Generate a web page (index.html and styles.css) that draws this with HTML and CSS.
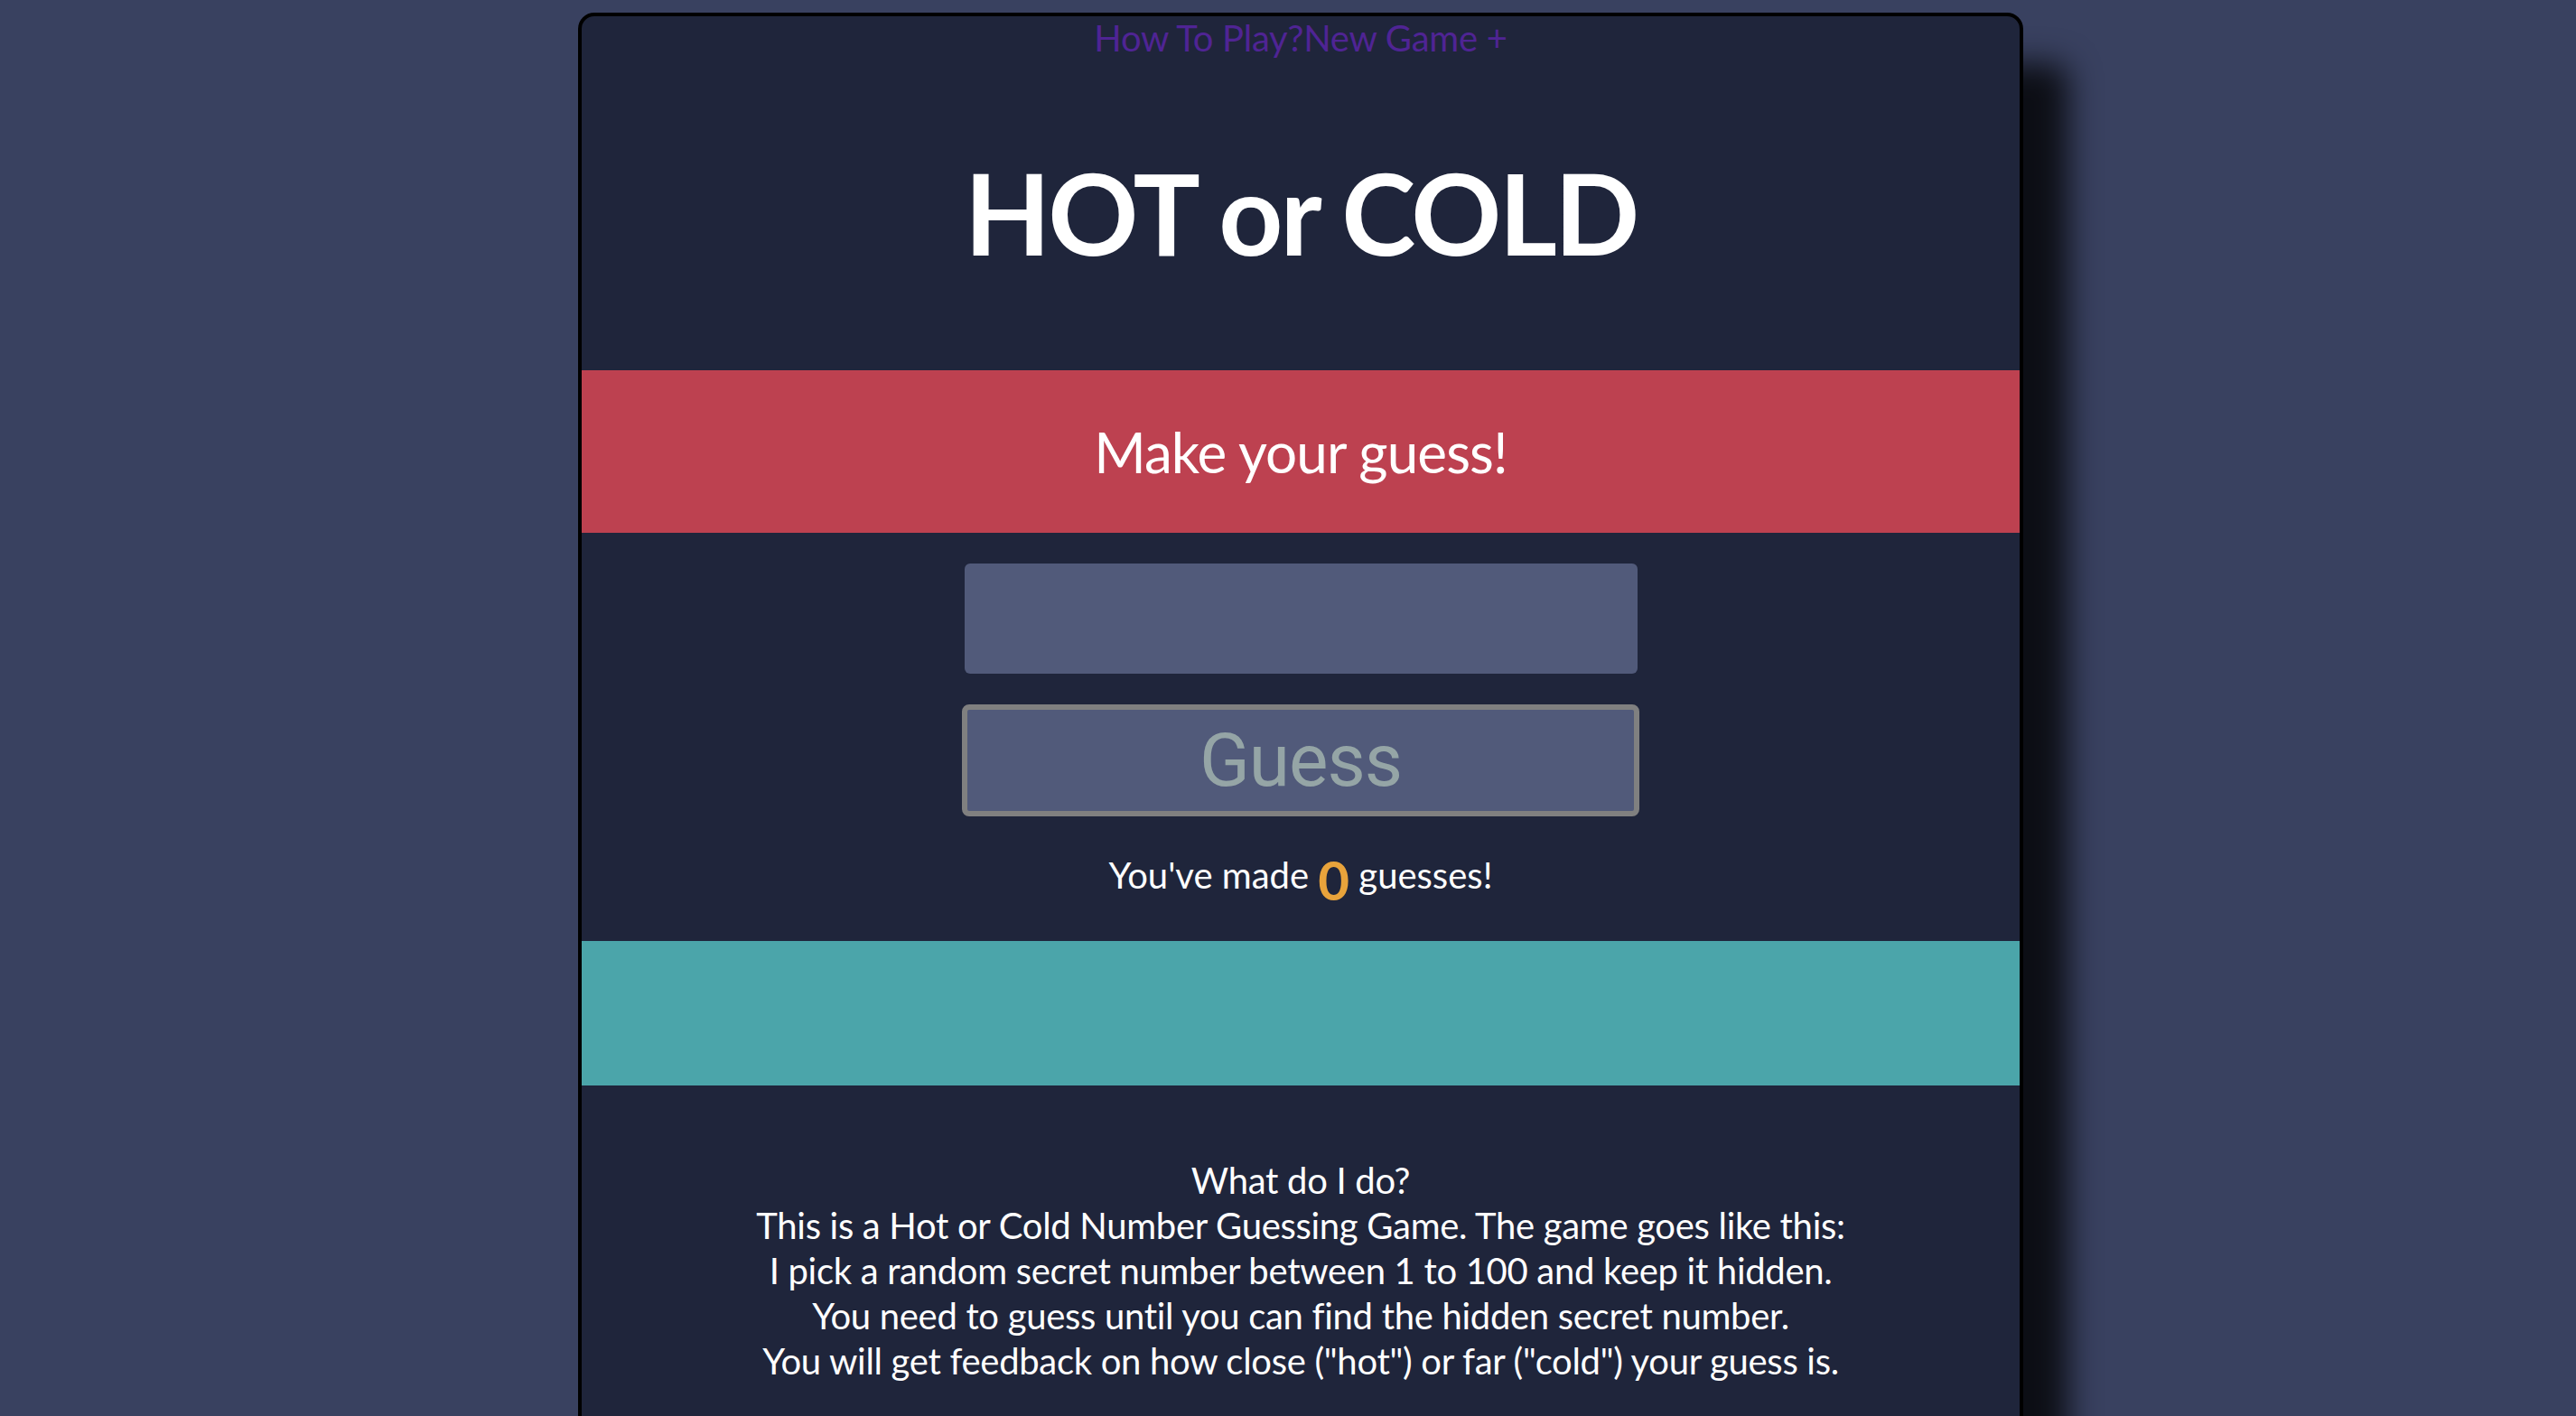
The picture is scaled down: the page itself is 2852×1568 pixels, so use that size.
FILE: index.html
```html
<!DOCTYPE html>
<html lang="en">
<head>
<meta charset="utf-8">
<title>HOT or COLD</title>
<link rel="stylesheet" href="styles.css">
</head>
<body>
<div class="card">
  <nav class="links"><a class="link" href="#">How To Play?</a><a class="link" href="#">New Game +</a></nav>
  <h1 class="title">HOT or COLD</h1>
  <h2 class="feedback">Make your guess!</h2>
  <form class="guess-form">
    <input class="guess-input" type="text" aria-label="Your guess">
    <button class="guess-btn" type="button">Guess</button>
  </form>
  <p class="count">You've made <span class="count-num">0</span> guesses!</p>
  <div class="history"></div>
  <div class="instructions">
    <p class="instr-text">What do I do?<br>This is a Hot or Cold Number Guessing Game. The game goes like this:<br>I pick a random secret number between 1 to 100 and keep it hidden.<br>You need to guess until you can find the hidden secret number.<br>You will get feedback on how close ("hot") or far ("cold") your guess is.</p>
  </div>
</div>
</body>
</html>
```

FILE: styles.css
```css
html, body {
  margin: 0;
  height: 100%;
}

body {
  background: #394160;
  padding: 14px 0 0 28px;
  box-sizing: border-box;
  overflow: hidden;
  font-family: Lato, "Noto Sans", sans-serif;
  color: #ffffff;
}

.card {
  width: 1600px;
  margin: 0 auto;
  box-sizing: border-box;
  background: #1f253b;
  border: 4px solid #000000;
  border-radius: 18px;
  box-shadow: 50px 56px 34px rgba(0, 0, 0, 0.78);
  padding-bottom: 300px;
}

.links {
  text-align: center;
  font-size: 40px;
  line-height: 48px;
  height: 48px;
  letter-spacing: -0.25px;
}

.link {
  color: #4f2494;
  text-decoration: none;
}

.title {
  margin: 95px 0 100px;
  text-align: center;
  font-size: 124px;
  line-height: 149px;
  font-weight: 700;
  letter-spacing: -3px;
  color: #ffffff;
}

.feedback {
  margin: 0;
  height: 180px;
  background: #bd4150;
  display: flex;
  align-items: center;
  justify-content: center;
  font-size: 62px;
  font-weight: 400;
  line-height: 74px;
  letter-spacing: -0.9px;
  color: #ffffff;
}

.guess-form {
  margin: 0;
  padding-top: 34px;
  display: flex;
  flex-direction: column;
  align-items: center;
  gap: 34px;
}

.guess-input {
  display: block;
  width: 745px;
  height: 122px;
  box-sizing: border-box;
  border: none;
  border-radius: 6px;
  background: #515a7a;
  margin: 0;
  padding: 0 20px;
  font-size: 60px;
  color: #ffffff;
}

.guess-btn {
  display: block;
  width: 750px;
  height: 124px;
  box-sizing: border-box;
  margin: 0;
  padding: 0;
  border: 6px solid #808080;
  border-radius: 8px;
  background: #515a7a;
  color: #95a5a6;
  font-family: Roboto, "Liberation Sans", sans-serif;
  font-size: 82px;
  letter-spacing: -1px;
  line-height: 1;
}

.count {
  margin: 41px 0 49px;
  text-align: center;
  font-size: 40px;
  line-height: 48px;
}

.count-num {
  font-size: 60px;
  font-weight: 700;
  line-height: 0;
  vertical-align: -13px;
  color: #e8a33b;
}

.history {
  height: 160px;
  background: #4ba5aa;
}

.instructions {
  padding-top: 80px;
}

.instr-text {
  margin: 0;
  text-align: center;
  font-size: 40px;
  line-height: 50px;
  letter-spacing: -0.3px;
}
```
